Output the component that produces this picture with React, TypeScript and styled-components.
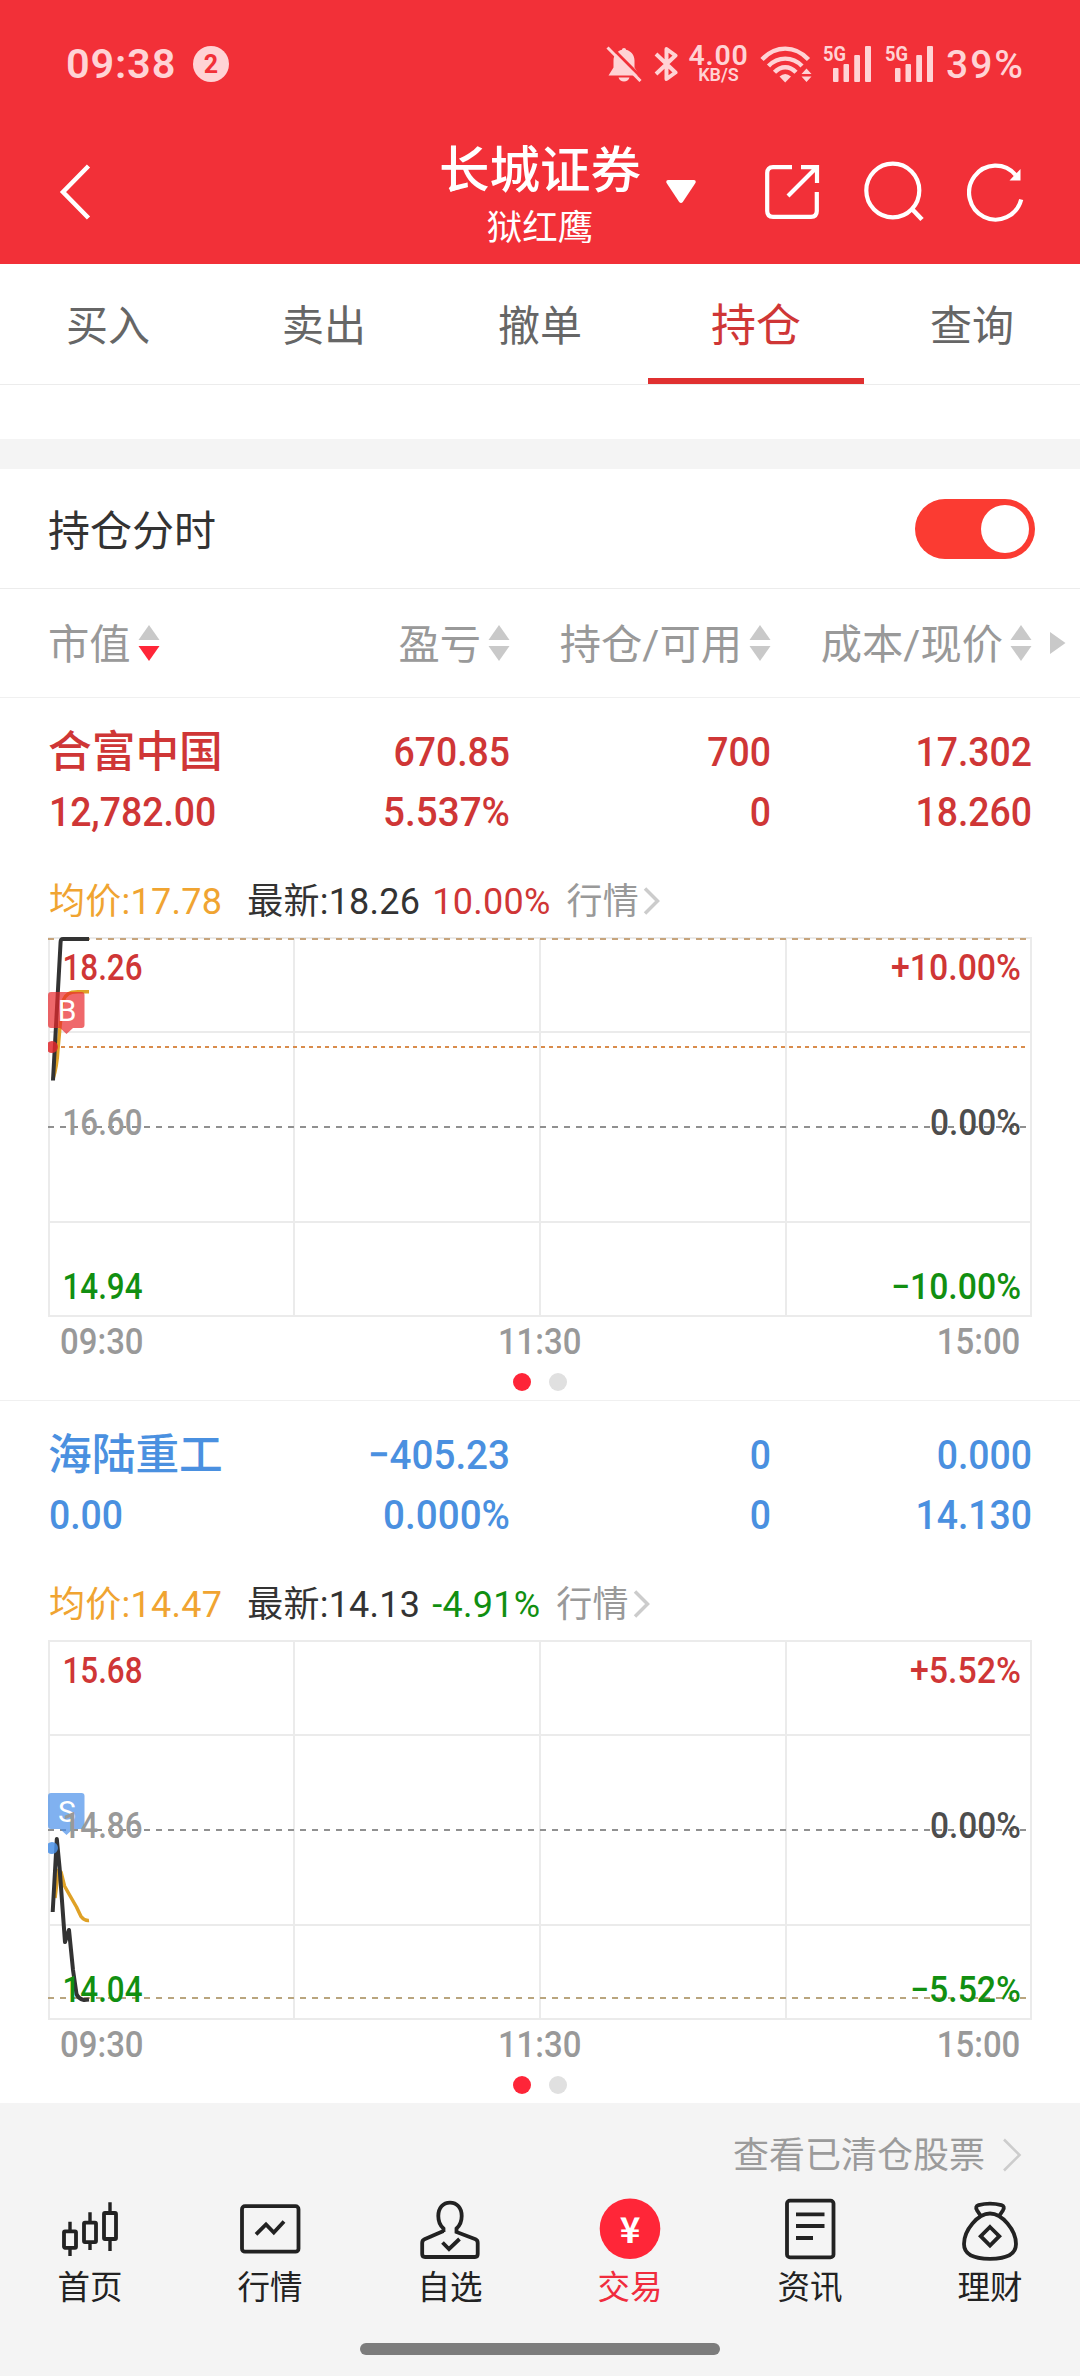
import React from 'react';
import styled, { createGlobalStyle } from 'styled-components';

const fontStack = 'Roboto, "Noto Sans CJK SC", sans-serif';

const GlobalStyle = createGlobalStyle`
  * { box-sizing: border-box; }
  body {
    margin: 0;
    background: #fff;
    font-family: ${fontStack};
  }
  svg { display: block; flex: none; }
`;

const color = {
  brand: '#f23038',
  status: '#ffd3d5',
  up: '#cf3636',
  down: '#118f11',
  flat: '#4a90e0',
  average: '#f0a431',
  ink: '#333',
  muted: '#999',
  line: '#ececec',
  panel: '#f4f4f4',
};

const Page = styled.div`
  width: 1080px;
  height: 2376px;
  overflow: hidden;
  display: flex;
  flex-direction: column;
  background: #fff;
`;

/* ---------- header ---------- */

const Header = styled.header`
  height: 264px;
  flex: none;
  background: ${color.brand};
  color: #fff;
`;

const StatusBar = styled.div`
  height: 128px;
  padding: 0 56px 0 66px;
  display: flex;
  align-items: center;
  justify-content: space-between;
  color: ${color.status};
`;

const StatusGroup = styled.div<{ $gap: number }>`
  display: flex;
  align-items: center;
  gap: ${(p) => p.$gap}px;
`;

const Clock = styled.span`
  font: 600 41.5px/48px ${fontStack};
  width: 109px;
  letter-spacing: 0.8px;
  white-space: nowrap;
`;

const CountBadge = styled.span`
  width: 36px;
  height: 36px;
  border-radius: 50%;
  background: ${color.status};
  color: ${color.brand};
  font: 700 25px/37px ${fontStack};
  text-align: center;
`;

const Speed = styled.div`
  width: 59px;
  display: flex;
  flex-direction: column;
  align-items: center;
  font-weight: 600;
  white-space: nowrap;
`;

const SpeedValue = styled.span`
  font-size: 28.5px;
  line-height: 21px;
  letter-spacing: 0.8px;
`;

const SpeedUnit = styled.span`
  font-size: 18px;
  line-height: 17px;
`;

const Battery = styled.span`
  font: 500 39px/44px ${fontStack};
  width: 78px;
  padding-top: 2px;
  letter-spacing: 2px;
  white-space: nowrap;
`;

const NavBar = styled.div`
  height: 136px;
  display: grid;
  grid-template-columns: 1fr 200px 1fr;
`;

const NavLeft = styled.div`
  padding: 35px 0 0 58px;
`;

const NavTitle = styled.div`
  display: flex;
  flex-direction: column;
  align-items: center;
  padding-top: 13px;
  white-space: nowrap;
`;

const Broker = styled.span`
  font-size: 50.5px;
  font-weight: 500;
  line-height: 60px;
`;

const Account = styled.span`
  font-size: 35.5px;
  line-height: 54px;
`;

const NavRight = styled.div`
  display: flex;
  padding: 33px 0 0 26px;
`;

const NavIcon = styled.span<{ $before: number }>`
  margin-left: ${(p) => p.$before}px;
`;

/* ---------- tabs ---------- */

const Tabs = styled.nav`
  height: 121px;
  flex: none;
  display: grid;
  grid-template-columns: repeat(5, 1fr);
  border-bottom: 1px solid ${color.line};
`;

const Tab = styled.a<{ $active: boolean }>`
  display: flex;
  justify-content: center;
  padding-top: 33px;
  line-height: 60px;
  font-size: ${(p) => (p.$active ? 45 : 42)}px;
  color: ${(p) => (p.$active ? color.up : '#666')};
  border-bottom: ${(p) => (p.$active ? '6px solid #e03030' : '0')};
`;

const Spacer = styled.div`
  height: 84px;
  flex: none;
  border-bottom: 30px solid ${color.panel};
`;

/* ---------- toggle row ---------- */

const ToggleRow = styled.div`
  height: 119px;
  flex: none;
  padding: 0 45px 0 48px;
  display: flex;
  align-items: center;
  justify-content: space-between;
  font-size: 42px;
  color: ${color.ink};
`;

const ToggleLabel = styled.span`
  line-height: 60px;
  padding-top: 6px;
`;

const Switch = styled.span`
  width: 120px;
  height: 60px;
  border-radius: 30px;
  background: #fb3b32;
  display: flex;
  justify-content: flex-end;
  padding: 6px;
`;

const Knob = styled.span`
  width: 48px;
  height: 48px;
  border-radius: 50%;
  background: #fff;
`;

/* ---------- table ---------- */

const columns = '231px 231px 261px 261px';

const HeadRow = styled.div`
  height: 109px;
  flex: none;
  padding-left: 48px;
  border-top: 1px solid ${color.line};
  display: grid;
  grid-template-columns: ${columns} 48px;
  align-items: center;
`;

const HeadCell = styled.div<{ $start?: boolean }>`
  display: flex;
  align-items: center;
  justify-content: ${(p) => (p.$start ? 'flex-start' : 'flex-end')};
  gap: 7px;
  font-size: 41.3px;
  line-height: 60px;
  color: ${color.muted};
  white-space: nowrap;
`;

const HeadText = styled.span`
  padding-top: 4px;
`;

const More = styled.div`
  padding-left: 18px;
`;

const Position = styled.section`
  height: 703px;
  flex: none;
  padding: 24px 48px 0;
  border-top: 1px solid #f0f0f0;
`;

const Figures = styled.div<{ $color: string }>`
  display: grid;
  grid-template-columns: ${columns};
  grid-auto-rows: 60px;
  line-height: 60px;
  font-size: 41.5px;
  font-weight: 500;
  color: ${(p) => p.$color};
  white-space: nowrap;
`;

const Name = styled.span`
  font-size: 43.7px;
`;

const Figure = styled.span<{ $start?: boolean; $wide?: boolean }>`
  text-align: ${(p) => (p.$start ? 'left' : 'right')};
  padding-left: ${(p) => (p.$start ? 1 : 0)}px;
  transform: scaleX(${(p) => (p.$wide ? 0.93 : 0.9)});
  transform-origin: ${(p) => (p.$start ? 'left' : 'right')} center;
`;

const Quote = styled.div`
  margin-top: 30px;
  padding-left: 1px;
  display: flex;
  align-items: center;
  font-size: 36px;
  line-height: 60px;
  white-space: nowrap;
`;

const QuoteItem = styled.span<{ $color: string; $before?: number }>`
  color: ${(p) => p.$color};
  margin-left: ${(p) => p.$before ?? 0}px;
  letter-spacing: 0.25px;
`;

const Chevron = styled.span`
  margin: 0 0 3px 4px;
`;

const ChartBox = styled.div`
  margin-top: 5px;
  height: 380px;
`;

const Times = styled.div`
  margin-top: 5px;
  height: 40px;
  padding: 0 12px;
  display: flex;
  justify-content: space-between;
  font-size: 36px;
  font-weight: 500;
  line-height: 40px;
  color: ${color.muted};
`;

const Time = styled.span<{ $origin: string }>`
  transform: scaleX(0.915);
  transform-origin: ${(p) => p.$origin} center;
`;

const Dots = styled.div`
  margin-top: 11px;
  display: flex;
  justify-content: center;
  gap: 18px;
`;

const Dot = styled.span<{ $on?: boolean }>`
  width: 18px;
  height: 18px;
  border-radius: 50%;
  background: ${(p) => (p.$on ? '#fe2538' : '#e0e0e0')};
`;

/* ---------- footer ---------- */

const Footer = styled.footer`
  flex: 1;
  background: ${color.panel};
`;

const ClearedLink = styled.a`
  height: 90px;
  padding: 21px 58px 0 0;
  display: flex;
  justify-content: flex-end;
  gap: 17px;
  font-size: 36px;
  line-height: 64px;
  color: #9b9b9b;
`;

const LinkChevron = styled.span`
  padding-top: 14px;
`;

const BottomNav = styled.nav`
  display: grid;
  grid-template-columns: repeat(6, 1fr);
  padding-top: 4px;
`;

const NavItem = styled.a<{ $active?: boolean }>`
  display: flex;
  flex-direction: column;
  align-items: center;
  gap: 5px;
  font-size: 32.5px;
  line-height: 40px;
  color: ${(p) => (p.$active ? '#f02c3d' : '#222')};
`;

const HomeBar = styled.div`
  width: 360px;
  height: 12px;
  border-radius: 6px;
  background: #7c7c7c;
  margin: 35px auto 0;
`;

/* ---------- icons ---------- */

const BellOff = () => (
  <svg width="36" height="36" viewBox="0 0 36 36">
    <path
      d="M18 2c1.200 0 2 .8 2 1.800 5 1.200 8.500 5.200 8.500 10.700v7L33.500 29.500H2.500L7.500 21.500v-7C7.500 9 11 5 16 3.800 16 2.800 16.800 2 18 2z"
      fill={color.status}
    />
    <path d="M12.500 31.500h11c-.8 2.600-2.800 4-5.500 4s-4.700-1.400-5.500-4z" fill={color.status} />
    <path d="M2.500 -1.500 37.500 33.500" stroke={color.brand} strokeWidth="3" />
    <path d="M1.500 1.500 34.500 35" stroke={color.status} strokeWidth="3" />
  </svg>
);

const Bluetooth = () => (
  <svg width="24" height="38" viewBox="0 0 24 38" fill="none" stroke={color.status} strokeWidth="4">
    <path d="M2 9 21.500 27.500 12.500 34V4L21.500 10.500 2 29" strokeLinejoin="round" />
  </svg>
);

const Wifi = () => (
  <svg width="52" height="38" viewBox="0 0 52 38" fill="none" stroke={color.status} strokeWidth="4.400">
    <path d="M2 14.500C15.500 0 35 0 48.500 14.500" />
    <path d="M8.500 21C18 11.200 32.500 11.200 42 21" />
    <path d="M14.500 27.300C21 20.500 29.500 20.500 36 27.300" />
    <path d="M25.200 37.500 19.500 31.500Q25.200 26.500 31 31.500z" fill={color.status} stroke="none" />
    <path d="M46.500 23.500l5 5.500h-10zM46.500 37l5-5.500h-10z" fill={color.status} stroke="none" />
  </svg>
);

const Signal = () => (
  <svg width="50" height="46" viewBox="0 -4 50 46" fill={color.status}>
    <text x="0" y="16" fontSize="21" fontWeight="700" textLength="23" lengthAdjust="spacingAndGlyphs">
      5G
    </text>
    <rect x="10" y="23" width="5.500" height="14" rx="1" />
    <rect x="20.500" y="19" width="5.500" height="18" rx="1" />
    <rect x="31.200" y="10" width="5.800" height="27" rx="1" />
    <rect x="42" y="1" width="6" height="36" rx="1" />
  </svg>
);

const Back = () => (
  <svg width="34" height="58" viewBox="0 0 34 58" fill="none" stroke="#fff" strokeWidth="4.500">
    <path d="M30.500 3 5 29 30.500 55" />
  </svg>
);

const Caret = () => (
  <svg width="30" height="62" viewBox="0 0 30 62" fill="#fff">
    <path d="M2 19h26q2.500.5 1.400 3L16.800 41q-1.800 2.200-3.600 0L.6 22Q-.5 19.500 2 19z" />
  </svg>
);

const Share = () => (
  <svg width="55" height="62" viewBox="0 0 55 62" fill="none" stroke="#fff" strokeWidth="4.200">
    <path d="M27 6.200H8Q2.200 6.200 2.200 12V50Q2.200 55.800 8 55.800H46Q51.800 55.800 51.800 50V31" />
    <path d="M36 6.200H52V22M51 7 23 35" />
  </svg>
);

const Search = () => (
  <svg width="60" height="62" viewBox="0 0 60 62" fill="none" stroke="#fff" strokeWidth="4.200">
    <ellipse cx="28.800" cy="29.500" rx="26.500" ry="26.800" />
    <path d="M48 48 58 58.500" strokeWidth="4.600" />
  </svg>
);

const Refresh = () => (
  <svg width="58" height="62" viewBox="0 0 58 62" fill="none" stroke="#fff" strokeWidth="4.200">
    <path d="M48.500 13.800A26.500 27 0 1 0 54.200 38.500" />
    <path d="M53.500 8V19.500H42.500z" fill="#fff" stroke="none" />
  </svg>
);

const Sorter = ({ desc }: { desc?: boolean }) => (
  <svg width="22" height="38" viewBox="0 0 22 38">
    <path d="M11 1 21.500 16H.5z" fill="#c9c9c9" />
    <path d="M11 37 21.500 22H.5z" fill={desc ? '#ff2638' : '#c9c9c9'} />
  </svg>
);

const navIconProps = {
  width: 64,
  height: 66,
  viewBox: '0 0 64 66',
  fill: 'none',
  stroke: '#222',
  strokeWidth: 3.8,
} as const;

const CandleIcon = () => (
  <svg {...navIconProps}>
    <rect x="6" y="34.300" width="12" height="16.500" rx="1" />
    <rect x="26" y="25.600" width="12" height="19.500" rx="1" />
    <rect x="46" y="16" width="12" height="26" rx="1" />
    <path d="M12 24.700V34M12 51v8M32 15.300V26M32 45v8M52 5.300V16M52 42v12" strokeWidth="3.400" />
  </svg>
);

const MarketIcon = () => (
  <svg {...navIconProps}>
    <rect x="4" y="9.200" width="56.500" height="45.500" rx="3" />
    <path d="M18 37.300 28 27.500 35.800 35.500 46 24.500" />
  </svg>
);

const WatchIcon = () => (
  <svg {...navIconProps}>
    <path d="M25.500 35V31.500C22 28.500 20.300 25 20.300 19 20.300 11 25 5.700 32 5.700S43.700 11 43.700 19C43.700 25 42 28.500 38.500 31.500V35L57.500 42.300Q59.700 43.300 59.700 46V57Q59.700 60 57 60H7Q4.200 60 4.200 57V46Q4.200 43.300 6.500 42.300L25.500 34" />
    <path d="M24.500 45.500 31 52 41.500 42" />
  </svg>
);

const TradeIcon = () => (
  <svg {...navIconProps}>
    <circle cx="32" cy="31.700" r="30.300" fill="#ff2638" stroke="none" />
    <text
      x="32"
      y="45.500"
      fill="#fff"
      stroke="none"
      textAnchor="middle"
      fontSize="35"
      fontWeight="700"
      fontFamily='"Noto Sans CJK SC", sans-serif'
    >
      ¥
    </text>
  </svg>
);

const NewsIcon = () => (
  <svg {...navIconProps}>
    <rect x="9" y="3.600" width="46.500" height="56.800" rx="3" />
    <path d="M18 17.300H46.500M18 29H46.500M18 41H35" />
  </svg>
);

const WealthIcon = () => (
  <svg {...navIconProps}>
    <path d="M32 16.500C20 16.500 6 33 6 47 6 57 14 61.800 32 61.800S58 57 58 47C58 33 44 16.500 32 16.500z" />
    <path d="M22.800 19 19 13.200Q16.800 9.200 20.500 8.200 32 5.200 43.500 8.200 47.200 9.200 45 13.200L41.200 19" />
    <path d="M32 30 41.300 39.200 32 48.500 22.700 39.200z" />
  </svg>
);

/* ---------- chart ---------- */

interface ChartData {
  high: string;
  mid: string;
  low: string;
  highPct: string;
  lowPct: string;
  price: string;
  average: string;
  lastY: number;
  lastColor: string;
  tradeLineY?: number;
  marker: { letter: string; y: number; fill: string; dotY: number; dot: string };
}

const AxisText = ({ x, y, w, fill, end, children }: {
  x: number; y: number; w: number; fill: string; end?: boolean; children: string;
}) => (
  <text
    x={x}
    y={y}
    fill={fill}
    fontSize="36"
    fontWeight="500"
    textAnchor={end ? 'end' : 'start'}
    textLength={w}
    lengthAdjust="spacingAndGlyphs"
  >
    {children}
  </text>
);

const pctWidth = (s: string) => (s.length === 7 ? 130 : s.length === 6 ? 111 : 91);

const Chart = ({ d }: { d: ChartData }) => (
  <svg width="984" height="380" viewBox="0 0 984 380" fontFamily="Roboto, sans-serif">
    <g stroke="#ebebeb" strokeWidth="2">
      {[1, 95, 285, 379].map((y) => <path key={y} d={`M0 ${y}H984`} />)}
      {[1, 246, 492, 738, 983].map((x) => <path key={x} d={`M${x} 0V380`} />)}
    </g>
    <path d="M0 190H980" stroke="#909090" strokeWidth="2" strokeDasharray="6 6" />
    <path d={`M0 ${d.lastY}H980`} stroke={d.lastColor} strokeWidth="2" strokeDasharray="6 6" />
    {d.tradeLineY && (
      <path d={`M5 ${d.tradeLineY}H980`} stroke="#d98c4c" strokeWidth="2" strokeDasharray="4 4" />
    )}
    <path d={d.average} fill="none" stroke="#dfa126" strokeWidth="3.500" strokeLinejoin="round" />
    <path d={d.price} fill="none" stroke="#333" strokeWidth="4" strokeLinejoin="round" />
    <circle cx="4" cy={d.marker.dotY} r="6" fill={d.marker.dot} fillOpacity="0.85" />
    <g transform={`translate(0 ${d.marker.y})`}>
      <path
        d="M3 0H33.500Q36.500 0 36.500 3V33Q36.500 36 33.500 36H25L18.500 42 12 36H3Q0 36 0 33V3Q0 0 3 0z"
        fill={d.marker.fill}
        fillOpacity="0.7"
      />
      <text x="19" y="28.500" fill="#fff" fontSize="30" textAnchor="middle">{d.marker.letter}</text>
    </g>
    <AxisText x={14.500} y={43} w={80} fill={color.up}>{d.high}</AxisText>
    <AxisText x={14.500} y={198} w={80} fill={color.muted}>{d.mid}</AxisText>
    <AxisText x={14.500} y={362} w={80} fill={color.down}>{d.low}</AxisText>
    <AxisText x={973} y={43} w={pctWidth(d.highPct)} fill={color.up} end>{d.highPct}</AxisText>
    <AxisText x={973} y={198} w={91} fill="#4d4d4d" end>0.00%</AxisText>
    <AxisText x={973} y={362} w={pctWidth(d.lowPct)} fill={color.down} end>{d.lowPct}</AxisText>
  </svg>
);

/* ---------- data ---------- */

const positions = [
  {
    tint: color.up,
    name: '合富中国',
    top: ['670.85', '700', '17.302'],
    value: '12,782.00',
    bottom: ['5.537%', '0', '18.260'],
    avg: '均价:17.78',
    last: '最新:18.26',
    change: '10.00%',
    changeColor: color.up,
    chart: {
      high: '18.26', mid: '16.60', low: '14.94', highPct: '+10.00%', lowPct: '−10.00%',
      price: 'M5 143.500 12.600 5Q12.700 2 15 2H41',
      average: 'M5 142Q9 130 10 112L14 68Q16 57 24 55.200L30 54.800H41',
      lastY: 2,
      lastColor: '#c6a47c',
      tradeLineY: 110,
      marker: { letter: 'B', y: 55, fill: '#e8282c', dotY: 110, dot: '#e0282c' },
    },
  },
  {
    tint: color.flat,
    name: '海陆重工',
    top: ['−405.23', '0', '0.000'],
    value: '0.00',
    bottom: ['0.000%', '0', '14.130'],
    avg: '均价:14.47',
    last: '最新:14.13',
    change: '-4.91%',
    changeColor: color.down,
    chart: {
      high: '15.68', mid: '14.86', low: '14.04', highPct: '+5.52%', lowPct: '−5.52%',
      price: 'M4.700 272 8.800 199 11.600 228 17 302 21 290 25 330 28.500 354Q30 358.500 36 360L41 359.500',
      average: 'M7 258 10.500 230 13 232 16.500 246 21 254 28.500 267 33 276.500Q36.500 281 41 280.500',
      lastY: 358,
      lastColor: '#b9a57e',
      marker: { letter: 'S', y: 153, fill: '#4a90ea', dotY: 208, dot: '#4a90e6' },
    },
  },
];

const tabs = ['买入', '卖出', '撤单', '持仓', '查询'];

const bottomNav = [
  { label: '首页', Icon: CandleIcon },
  { label: '行情', Icon: MarketIcon },
  { label: '自选', Icon: WatchIcon },
  { label: '交易', Icon: TradeIcon, active: true },
  { label: '资讯', Icon: NewsIcon },
  { label: '理财', Icon: WealthIcon },
];

const isWide = (v: string) => v.endsWith('%') || v.startsWith('−');

export default function App() {
  return (
    <Page>
      <GlobalStyle />
      <Header>
        <StatusBar>
          <StatusGroup $gap={18}>
            <Clock>09:38</Clock>
            <CountBadge>2</CountBadge>
          </StatusGroup>
          <StatusGroup $gap={11.5}>
            <BellOff />
            <Bluetooth />
            <Speed>
              <SpeedValue>4.00</SpeedValue>
              <SpeedUnit>KB/S</SpeedUnit>
            </Speed>
            <Wifi />
            <Signal />
            <Signal />
            <Battery>39%</Battery>
          </StatusGroup>
        </StatusBar>
        <NavBar>
          <NavLeft><Back /></NavLeft>
          <NavTitle>
            <Broker>长城证券</Broker>
            <Account>狱红鹰</Account>
          </NavTitle>
          <NavRight>
            <Caret />
            <NavIcon $before={69}><Share /></NavIcon>
            <NavIcon $before={44}><Search /></NavIcon>
            <NavIcon $before={43}><Refresh /></NavIcon>
          </NavRight>
        </NavBar>
      </Header>

      <Tabs>
        {tabs.map((t) => <Tab key={t} $active={t === '持仓'}>{t}</Tab>)}
      </Tabs>
      <Spacer />

      <ToggleRow>
        <ToggleLabel>持仓分时</ToggleLabel>
        <Switch><Knob /></Switch>
      </ToggleRow>

      <HeadRow>
        <HeadCell $start><HeadText>市值</HeadText><Sorter desc /></HeadCell>
        <HeadCell><HeadText>盈亏</HeadText><Sorter /></HeadCell>
        <HeadCell><HeadText>持仓/可用</HeadText><Sorter /></HeadCell>
        <HeadCell><HeadText>成本/现价</HeadText><Sorter /></HeadCell>
        <More>
          <svg width="16" height="22" viewBox="0 0 16 22"><path d="M0 0 15.500 11 0 22z" fill="#c9c9c9" /></svg>
        </More>
      </HeadRow>

      {positions.map((p) => (
        <Position key={p.name}>
          <Figures $color={p.tint}>
            <Name>{p.name}</Name>
            {p.top.map((v, i) => <Figure key={i} $wide={isWide(v)}>{v}</Figure>)}
            <Figure $start>{p.value}</Figure>
            {p.bottom.map((v, i) => <Figure key={i} $wide={isWide(v)}>{v}</Figure>)}
          </Figures>
          <Quote>
            <QuoteItem $color={color.average}>{p.avg}</QuoteItem>
            <QuoteItem $color={color.ink} $before={25}>{p.last}</QuoteItem>
            <QuoteItem $color={p.changeColor} $before={12}>{p.change}</QuoteItem>
            <QuoteItem $color={color.muted} $before={16}>行情</QuoteItem>
            <Chevron>
              <svg width="18" height="28" viewBox="0 0 18 28" fill="none" stroke="#ccc" strokeWidth="3.500">
                <path d="M2 1.500 14.500 14 2 26.500" />
              </svg>
            </Chevron>
          </Quote>
          <ChartBox><Chart d={p.chart} /></ChartBox>
          <Times>
            <Time $origin="left">09:30</Time>
            <Time $origin="center">11:30</Time>
            <Time $origin="right">15:00</Time>
          </Times>
          <Dots><Dot $on /><Dot /></Dots>
        </Position>
      ))}

      <Footer>
        <ClearedLink>
          查看已清仓股票
          <LinkChevron>
            <svg width="20" height="34" viewBox="0 0 20 34" fill="none" stroke="#ccc" strokeWidth="2.600">
              <path d="M2 1.500 17.500 17 2 32.500" />
            </svg>
          </LinkChevron>
        </ClearedLink>
        <BottomNav>
          {bottomNav.map(({ label, Icon, active }) => (
            <NavItem key={label} $active={active}>
              <Icon />
              {label}
            </NavItem>
          ))}
        </BottomNav>
        <HomeBar />
      </Footer>
    </Page>
  );
}
